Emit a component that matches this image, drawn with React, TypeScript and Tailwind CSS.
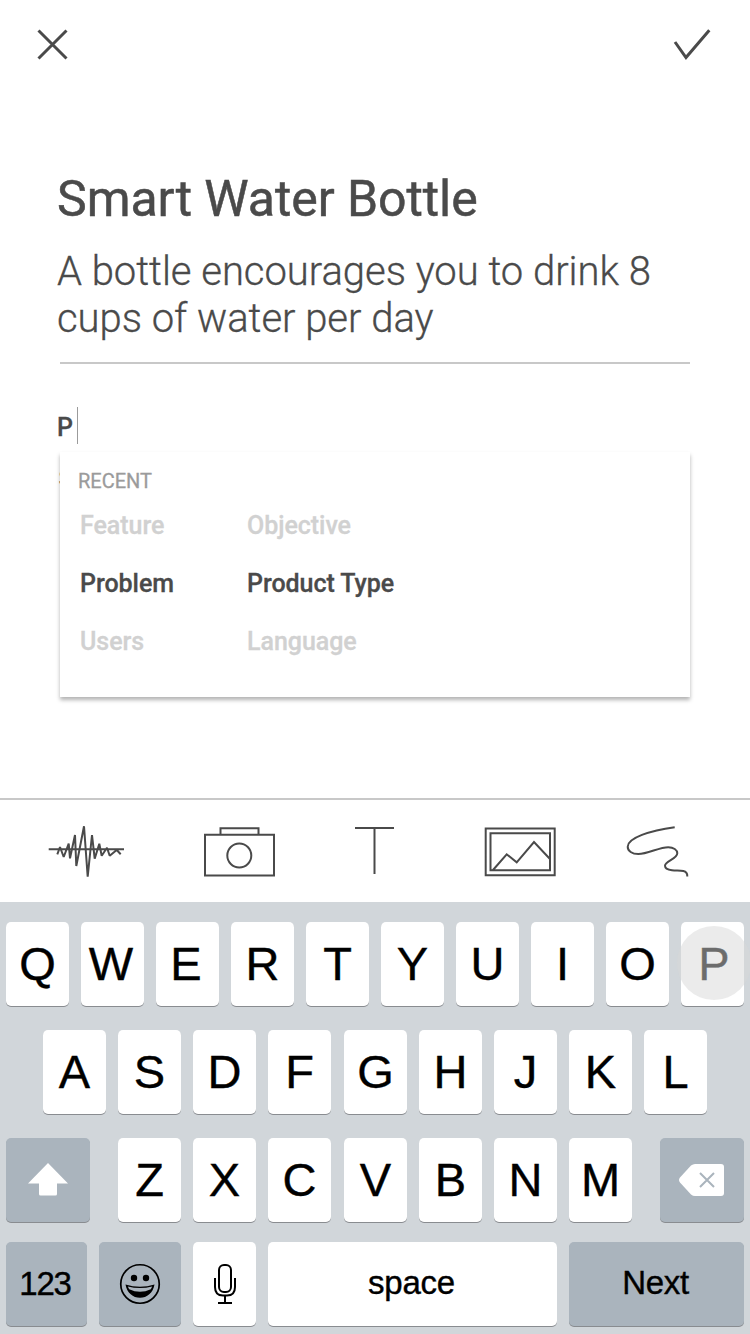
import type { ReactNode } from "react";

const suggestions = [
  { label: "Feature", match: false },
  { label: "Objective", match: false },
  { label: "Problem", match: true },
  { label: "Product Type", match: true },
  { label: "Users", match: false },
  { label: "Language", match: false },
];

const line = { fill: "none", stroke: "#4a4a4a", strokeWidth: 2 };

function Key({ children, className = "w-[63px] bg-white" }: { children?: ReactNode; className?: string }) {
  return (
    <button
      type="button"
      className={`relative flex h-[84px] shrink-0 items-center justify-center rounded-[5px] text-black shadow-[0_1px_0_#898c90] ${className}`}
    >
      {children}
    </button>
  );
}

function Letter({ children }: { children: string }) {
  return <span className="pb-0.5 text-[47px] leading-none [-webkit-text-stroke:0.4px_currentColor]">{children}</span>;
}

function Header() {
  return (
    <header className="flex h-[90px] shrink-0 justify-between pt-6 pr-9 pl-8">
      <svg width="40" height="40" {...line} strokeWidth={3}>
        <path d="M6.500 6.500 34.500 34.500M34.500 6.500 6.500 34.500" />
      </svg>
      <svg width="44" height="40" {...line} strokeWidth={3}>
        <path d="M5 18 16 33.500 39.300 6.300" />
      </svg>
    </header>
  );
}

function Toolbar() {
  return (
    <div className="flex h-[104px] shrink-0 items-start border-t-2 border-[#c8c8c8] pt-6 pl-12">
      <svg width="78" height="56" {...line}>
        <path
          strokeLinejoin="bevel"
          d="M.7 25.3H76M9.3 30.300 12 23 15.700 33 20.700 19.700 22 34.300 27 11 28.300 42 36 2.300 39.700 52.700 44 11 46.700 34.700 51.300 19.700 53.700 31.700 59 23.700 61.700 31.700 68.700 26 72.700 30.300"
        />
      </svg>
      <svg width="74" height="56" className="ml-[76px]" {...line}>
        <path d="M3 10.700H72V51.500H3ZM18.500 10V4.200H56.500V10" />
        <circle cx="37.300" cy="31.500" r="12" />
      </svg>
      <svg width="42" height="56" className="ml-[78px]" {...line}>
        <path d="M1 4H40M20.500 4V50" />
      </svg>
      <svg width="74" height="56" className="ml-[88px]" {...line}>
        <path d="M1.700 4.500H70.700V51.200H1.700ZM6.500 9.200H66V46.300H6.500ZM9 46 22.700 30.300 32.700 38.300 50 18 65.500 34.500" />
      </svg>
      <svg width="76" height="56" className="ml-[68px]" {...line}>
        <path d="M48.700 3.200C24 6.500 1.700 14 1.700 22.700C1.700 27 6 30 12.300 30C22 30 33 23.200 42.300 23.200C47.500 23.200 51.300 26 51.300 29.300C51.300 35 39 37 39 41.700C39 44.500 42 45.700 46 46.200C50 46.700 54 46.300 57.300 47C60.500 47.700 61.500 49 61.300 52.500" />
      </svg>
    </div>
  );
}

function Keyboard() {
  return (
    <div className="flex h-[432px] shrink-0 flex-col bg-[#d1d6da] px-1.5 pt-5 font-['Liberation_Sans',Arial,sans-serif]">
      <div className="flex gap-3">
        {"QWERTYUIO".split("").map((c) => (
          <Key key={c} className={c === "W" || c === "E" ? "w-[63px] bg-white pr-[3px]" : "w-[63px] bg-white"}>
            <Letter>{c}</Letter>
          </Key>
        ))}
        <Key className="w-[63px] bg-white pl-[3px]">
          <Letter>P</Letter>
          <span className="absolute top-1 -left-1 size-[74px] rounded-full bg-[#d8d8d8]/50" />
        </Key>
      </div>
      <div className="mt-6 flex gap-3 pl-[37px]">
        {"ASDFGHJKL".split("").map((c) => (
          <Key key={c} className={c === "G" ? "ml-px w-[63px] bg-white" : "w-[63px] bg-white"}>
            <Letter>{c}</Letter>
          </Key>
        ))}
      </div>
      <div className="mt-6 flex justify-between">
        <Key className="w-[84px] bg-[#aab4bd]">
          <svg width="42" height="36" viewBox="0 0 42 36" fill="white">
            <path d="M21 1 41 21.500H30V32a1.500 1.500 0 0 1-1.500 1.500H13.500A1.500 1.500 0 0 1 12 32V21.500H1Z" />
          </svg>
        </Key>
        <div className="flex gap-3">
          {"ZXCVBNM".split("").map((c) => (
            <Key key={c} className={c === "V" ? "ml-px w-[63px] bg-white" : "w-[63px] bg-white"}>
              <Letter>{c}</Letter>
            </Key>
          ))}
        </div>
        <Key className="w-[84px] bg-[#aab4bd]">
          <svg width="46" height="32" viewBox="0 0 46 32">
            <path d="M16 0H42A3 3 0 0 1 45 3V29A3 3 0 0 1 42 32H16Q14 32 12 30.500L1 18.500Q-1 16 1 13.500L12 1.500Q14 0 16 0Z" fill="white" />
            <path d="M21 9 35 23M35 9 21 23" stroke="#aab4bd" strokeWidth="2" />
          </svg>
        </Key>
      </div>
      <div className="mt-5 flex gap-3">
        <Key className="w-[81px] bg-[#aab4bd] pr-[3px]">
          <span className="pb-0.5 text-[33px] leading-none tracking-[-1.2px] [-webkit-text-stroke:0.4px_currentColor]">123</span>
        </Key>
        <Key className="w-[82px] bg-[#aab4bd]">
          <svg width="42" height="42" viewBox="0 0 42 42">
            <circle cx="21" cy="21" r="19.250" fill="none" stroke="black" strokeWidth="1.700" />
            <circle cx="15" cy="15" r="3.200" />
            <circle cx="27" cy="15" r="3.200" />
            <path d="M6.500 21.500Q21 26 35.500 21.500C34 30 28 34.800 21 34.800S8 30 6.500 21.500Z" fill="black" />
            <path d="M8.800 23.500Q21 26.700 33.200 23.500Q32.700 24.800 31.800 26.200Q21 31.500 10.200 26.200Q9.300 24.800 8.800 23.500Z" fill="#aab4bd" />
          </svg>
        </Key>
        <Key>
          <svg width="24" height="42" viewBox="0 0 24 42" fill="none" stroke="black" strokeWidth="2">
            <rect x="6" y="2" width="12" height="27" rx="5" />
            <path d="M2 15V24Q2 32.500 10 32.500H14Q22 32.500 22 24V15M12 32V40M5 40H19" />
          </svg>
        </Key>
        <Key className="w-[289px] bg-white pr-0.5">
          <span className="pb-1 text-[33px] leading-none tracking-[-0.2px] [-webkit-text-stroke:0.4px_currentColor]">space</span>
        </Key>
        <Key className="w-[175px] bg-[#aab4bd] pr-0.5">
          <span className="pb-1 text-[33px] leading-none tracking-[-0.3px] [-webkit-text-stroke:0.4px_currentColor]">Next</span>
        </Key>
      </div>
    </div>
  );
}

export default function App() {
  return (
    <div className="flex h-[1334px] w-[750px] flex-col overflow-hidden bg-white font-[Roboto,sans-serif] text-[#4a4a4a]">
      <Header />
      <main className="flex-1 pt-20 pr-[60px] pl-[57px]">
        <h1 className="text-[50px] leading-[58px] tracking-[-0.06px] [-webkit-text-stroke:0.5px_currentColor]">Smart Water Bottle</h1>
        <p className="mt-5 text-[40px] leading-[47px] font-light tracking-[-0.03px] whitespace-nowrap [-webkit-text-stroke:0.3px_currentColor]">
          A bottle encourages you to drink 8<br />
          cups of water per day
        </p>
        <div className="mt-5 ml-[3px] h-0.5 bg-[#c8c8c8]" />
        <div className="relative mt-[43px]">
          <div className="flex h-[37px] items-center">
            <span className="w-5 pt-1 text-[25px] leading-none font-medium [-webkit-text-stroke:0.3px_currentColor]">P</span>
            <span className="h-[37px] w-px bg-[#9b9b9b]" />
          </div>
          <p className="mt-[23px] pl-[1.5px] text-[22px] leading-[24px] text-[#4a4a4a]">S</p>
          <section className="absolute top-[45px] right-0 left-[3px] h-[245px] bg-white px-5 pt-[19px] shadow-[0_3px_4px_rgba(0,0,0,0.3)]">
            <h2 className="-ml-0.5 text-[20px] leading-[20px] text-[#9b9b9b] [-webkit-text-stroke:0.3px_currentColor]">RECENT</h2>
            <ul className="mt-1.5 grid grid-cols-[167px_1fr]">
              {suggestions.map((s) => (
                <li
                  key={s.label}
                  className={`flex h-[58px] items-center text-[25px] font-medium tracking-[-0.04px] [-webkit-text-stroke:0.3px_currentColor] ${s.match ? "text-[#4a4a4a]" : "text-[#d1d1d1]"}`}
                >
                  {s.label}
                </li>
              ))}
            </ul>
          </section>
        </div>
      </main>
      <Toolbar />
      <Keyboard />
    </div>
  );
}
